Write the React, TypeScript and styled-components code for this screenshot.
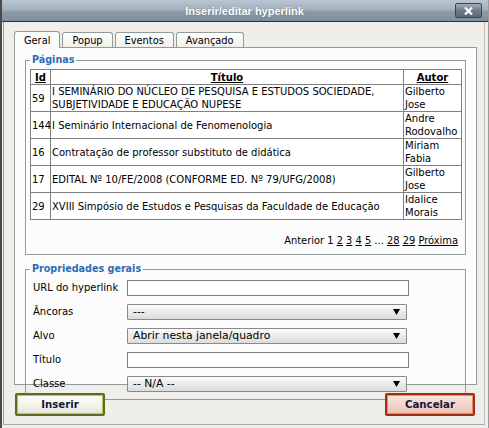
import React from "react";
import styled, { createGlobalStyle } from "styled-components";

const GlobalStyle = createGlobalStyle`
    html, body {
        margin: 0;
        padding: 0;
        background: #f0eeea;
    }
    body {
        font-family: "DejaVu Sans", Verdana, sans-serif;
        color: #000;
    }
`;

const Window = styled.div`
    display: flex;
    flex-direction: column;
    width: 489px;
    height: 428px;
    box-sizing: border-box;
    border-left: 2px solid #4a4a4a;
    border-right: 1px solid #9a9a9a;
    background: #f0eeea;
    overflow: hidden;
`;

const TitleBar = styled.div`
    display: flex;
    align-items: center;
    justify-content: center;
    position: relative;
    height: 21px;
    border-bottom: 1px solid #2e3338;
    margin-left: -2px;
    margin-right: -1px;
    background: linear-gradient(#b9c6d0 0%, #a3b2be 45%, #8c9ba8 55%, #7e8e9b 100%);
`;

const Title = styled.span`
    font-family: "Liberation Sans", Arial, sans-serif;
    font-weight: bold;
    font-size: 11px;
    color: #fff;
    text-shadow: 0 0 1px rgba(40, 50, 60, 0.5);
`;

const CloseButton = styled.div`
    position: absolute;
    right: 7px;
    top: 3px;
    width: 27px;
    height: 15px;
    box-sizing: border-box;
    display: flex;
    align-items: center;
    justify-content: center;
    border: 1px solid #3c4650;
    border-radius: 2px;
    background: linear-gradient(#a3afba, #6f7d89 50%, #5c6a76);
`;

const Body = styled.div`
    flex: 1;
    display: flex;
    flex-direction: column;
    margin: 0 3px 3px 1px;
    padding: 9px 7px 0 10px;
    border-left: 1px solid #a4a4a4;
    border-right: 1px solid #c4c0b8;
    border-bottom: 1px solid #a8a8a8;
`;

const TabRow = styled.div`
    display: flex;
    align-items: flex-end;
    gap: 2px;
    height: 16px;
`;

const Tab = styled.div<{ $active?: boolean }>`
    position: relative;
    z-index: 1;
    display: flex;
    align-items: center;
    box-sizing: border-box;
    height: ${(p) => (p.$active ? "17px" : "15px")};
    margin-bottom: ${(p) => (p.$active ? "-1px" : "0")};
    padding: 0 9px 0 9px;
    border: 1px solid #919b9c;
    border-bottom: none;
    border-radius: 3px 3px 0 0;
    font-size: 9.8px;
    background: ${(p) => (p.$active ? "#fcfcfc" : "linear-gradient(#ffffff, #f0efea)")};
`;

const Panel = styled.div`
    height: 338px;
    box-sizing: border-box;
    border: 1px solid #919b9c;
    background: #fcfcfc;
    padding: 6px 10px 0 10px;
`;

const Fieldset = styled.fieldset<{ $gap?: number }>`
    margin: ${(p) => p.$gap ?? 0}px 0 0 0;
    padding: 3px 4px 7px 4px;
    border: 1px solid #919b9c;
    min-width: 0;
`;

const Legend = styled.legend`
    padding: 0 2px;
    font-weight: bold;
    font-size: 9.6px;
    line-height: 12px;
    color: #2e6db4;
`;

const ResultsTable = styled.table`
    width: 431px;
    table-layout: fixed;
    border-collapse: collapse;
    font-size: 10px;
    line-height: 13px;
    background: #fff;
`;

const Th = styled.th`
    border: 1px solid #808080;
    padding: 1px 1px 0 1px;
    font-weight: bold;
    text-decoration: underline;
    text-align: center;
`;

const Td = styled.td`
    border: 1px solid #808080;
    padding: 0 1px;
    vertical-align: middle;
    text-align: left;
    height: 26px;
    overflow: visible;
    white-space: normal;
`;

const Pager = styled.div`
    margin-top: 14px;
    text-align: right;
    font-size: 9.9px;
    line-height: 13px;
    padding-right: 3px;
`;

const PageLink = styled.a`
    color: #000;
    text-decoration: underline;
`;

const FormGrid = styled.div`
    display: grid;
    grid-template-columns: 94px auto;
    row-gap: 8px;
    align-items: center;
    padding: 2px 0 0 3px;
`;

const Label = styled.label`
    font-size: 10px;
    line-height: 16px;
`;

const TextInput = styled.div`
    width: 282px;
    height: 16px;
    box-sizing: border-box;
    border: 1px solid #7e7e7e;
    background: #fff;
`;

const SelectBox = styled.div`
    display: flex;
    align-items: center;
    justify-content: space-between;
    width: 280px;
    height: 16px;
    box-sizing: border-box;
    padding: 0 6px 0 5px;
    border: 1px solid #8a8a8a;
    border-radius: 1px;
    background: linear-gradient(#fafafa, #ebebeb 50%, #dcdcdc);
    font-size: 10.8px;
    line-height: 14px;
`;

const ButtonRow = styled.div`
    display: flex;
    justify-content: space-between;
    margin: 8px 2px 0 1px;
`;

const ActionButton = styled.div<{ $tone: "go" | "stop" }>`
    position: relative;
    z-index: 2;
    width: 90px;
    height: 23px;
    box-sizing: border-box;
    display: flex;
    align-items: center;
    justify-content: center;
    border: 2px solid ${(p) => (p.$tone === "go" ? "#5f6a1c" : "#a42d0e")};
    border-radius: 2px;
    box-shadow: inset 0 0 0 1px ${(p) => (p.$tone === "go" ? "#b8c45a" : "#e48a6e")};
    background: ${(p) =>
        p.$tone === "go"
            ? "linear-gradient(#fdfdfa, #f3f3ec 55%, #e3e3d8)"
            : "linear-gradient(#fbe6df, #f4d2c8 55%, #ecc0b3)"};
    font-weight: bold;
    font-size: 10.2px;
    color: #15183a;
`;

const rows = [
    { id: "59", title: "I SEMINÁRIO DO NÚCLEO DE PESQUISA E ESTUDOS SOCIEDADE, SUBJETIVIDADE E EDUCAÇÃO NUPESE", author: "Gilberto Jose" },
    { id: "144", title: "I Seminário Internacional de Fenomenologia", author: "Andre Rodovalho" },
    { id: "16", title: "Contratação de professor substituto de didática", author: "Miriam Fabia" },
    { id: "17", title: "EDITAL Nº 10/FE/2008 (CONFORME ED. Nº 79/UFG/2008)", author: "Gilberto Jose" },
    { id: "29", title: "XVIII Simpósio de Estudos e Pesquisas da Faculdade de Educação", author: "Idalice Morais" },
];

function Arrow() {
    return (
        <svg width="7" height="6" viewBox="0 0 7 6">
            <polygon points="0,0 7,0 3.5,6" fill="#000" />
        </svg>
    );
}

function App() {
    return (
        <>
            <GlobalStyle />
            <Window>
                <TitleBar>
                    <Title>Inserir/editar hyperlink</Title>
                    <CloseButton>
                        <svg width="9" height="8" viewBox="0 0 9 8">
                            <path d="M1 0.5 L8 7.5 M8 0.5 L1 7.5" stroke="#fff" strokeWidth="2.2" />
                        </svg>
                    </CloseButton>
                </TitleBar>
                <Body>
                    <TabRow>
                        <Tab $active>Geral</Tab>
                        <Tab>Popup</Tab>
                        <Tab>Eventos</Tab>
                        <Tab>Avançado</Tab>
                    </TabRow>
                    <Panel>
                        <Fieldset>
                            <Legend>Páginas</Legend>
                            <ResultsTable>
                                <colgroup>
                                    <col style={{ width: 20 }} />
                                    <col style={{ width: 353 }} />
                                    <col style={{ width: 58 }} />
                                </colgroup>
                                <thead>
                                    <tr>
                                        <Th>Id</Th>
                                        <Th>Título</Th>
                                        <Th>Autor</Th>
                                    </tr>
                                </thead>
                                <tbody>
                                    {rows.map((r) => (
                                        <tr key={r.id}>
                                            <Td>{r.id}</Td>
                                            <Td>{r.title}</Td>
                                            <Td>{r.author}</Td>
                                        </tr>
                                    ))}
                                </tbody>
                            </ResultsTable>
                            <Pager>
                                Anterior 1 <PageLink>2</PageLink> <PageLink>3</PageLink>{" "}
                                <PageLink>4</PageLink> <PageLink>5</PageLink> ...{" "}
                                <PageLink>28</PageLink> <PageLink>29</PageLink>{" "}
                                <PageLink>Próxima</PageLink>
                            </Pager>
                        </Fieldset>
                        <Fieldset $gap={8}>
                            <Legend>Propriedades gerais</Legend>
                            <FormGrid>
                                <Label>URL do hyperlink</Label>
                                <TextInput />
                                <Label>Âncoras</Label>
                                <SelectBox>
                                    <span>---</span>
                                    <Arrow />
                                </SelectBox>
                                <Label>Alvo</Label>
                                <SelectBox>
                                    <span>Abrir nesta janela/quadro</span>
                                    <Arrow />
                                </SelectBox>
                                <Label>Título</Label>
                                <TextInput />
                                <Label>Classe</Label>
                                <SelectBox>
                                    <span>-- N/A --</span>
                                    <Arrow />
                                </SelectBox>
                            </FormGrid>
                        </Fieldset>
                    </Panel>
                    <ButtonRow>
                        <ActionButton $tone="go">Inserir</ActionButton>
                        <ActionButton $tone="stop">Cancelar</ActionButton>
                    </ButtonRow>
                </Body>
            </Window>
        </>
    );
}

export default App;
